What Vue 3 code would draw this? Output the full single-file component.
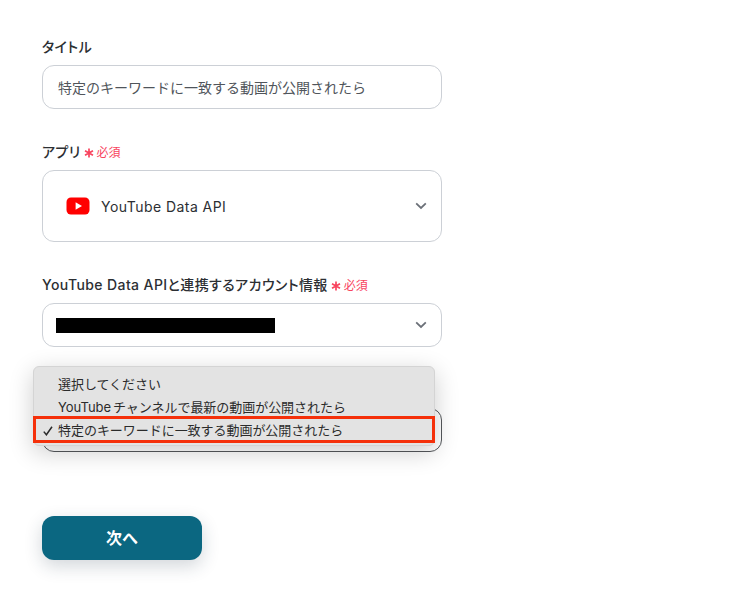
<template>
  <div class="page">
    <div class="field">
      <div class="label">タイトル</div>
      <div class="box">
        <span class="value muted">特定のキーワードに一致する動画が公開されたら</span>
      </div>
    </div>

    <div class="field">
      <div class="label">アプリ<span class="req"><svg class="star" width="10" height="10" viewBox="0 0 10 10"><path d="M5 0.4 V9.6 M1 2.7 L9 7.3 M9 2.7 L1 7.3" stroke="#f8445e" stroke-width="1.7" fill="none" /></svg>必須</span></div>
      <div class="box tall">
        <svg class="yt" width="24" height="18" viewBox="0 0 24 18">
          <rect x="0.5" y="0.5" width="23" height="17" rx="4.5" fill="#ff0000" />
          <path d="M9.6 5.2 L16 9 L9.6 12.8 Z" fill="#fff" />
        </svg>
        <span class="value latin">YouTube Data API</span>
        <svg class="chev" width="12" height="8" viewBox="0 0 12 8">
          <path d="M1.2 1.4 L6 6 L10.8 1.4" fill="none" stroke="#6b7078" stroke-width="1.8" />
        </svg>
      </div>
    </div>

    <div class="field">
      <div class="label">YouTube Data APIと連携するアカウント情報<span class="req"><svg class="star" width="10" height="10" viewBox="0 0 10 10"><path d="M5 0.4 V9.6 M1 2.7 L9 7.3 M9 2.7 L1 7.3" stroke="#f8445e" stroke-width="1.7" fill="none" /></svg>必須</span></div>
      <div class="box">
        <div class="redact"></div>
        <svg class="chev" width="12" height="8" viewBox="0 0 12 8">
          <path d="M1.2 1.4 L6 6 L10.8 1.4" fill="none" stroke="#6b7078" stroke-width="1.8" />
        </svg>
      </div>
    </div>

    <div class="action-field">
      <div class="box dark"></div>
      <div class="menu">
        <div class="opt"><span class="tick"></span>選択してください</div>
        <div class="opt"><span class="tick"></span><span class="yt-word">YouTube</span>チャンネルで最新の動画が公開されたら</div>
        <div class="opt">
          <span class="tick">
            <svg width="10" height="10" viewBox="0 0 10 10">
              <path d="M0.8 5.6 L3.4 8.8 L9 0.8" fill="none" stroke="#2b2b2b" stroke-width="1.5" />
            </svg>
          </span>{{ selected }}
        </div>
        <div class="mark"></div>
      </div>
    </div>

    <button class="next">次へ</button>
  </div>
</template>

<script setup>
const selected = '特定のキーワードに一致する動画が公開されたら'
</script>

<style scoped>
.page {
  width: 737px;
  height: 593px;
  box-sizing: border-box;
  padding: 37px 0 0 42px;
  background: #fff;
  overflow: hidden;
  font-family: Inter, "Noto Sans CJK JP", sans-serif;
  color: #2c2f33;
}

.field {
  width: 400px;
  margin-bottom: 33px;
}

.label {
  height: 20px;
  margin-bottom: 8px;
  font-size: 14px;
  font-weight: 500;
  line-height: 20px;
  letter-spacing: 0.4px;
  font-feature-settings: "palt";
  white-space: nowrap;
}

.req {
  margin-left: 3px;
  font-size: 12px;
  font-weight: 400;
  letter-spacing: 0;
  color: #f8445e;
}

.star {
  margin-right: 3px;
  vertical-align: -1px;
}

.box {
  display: flex;
  align-items: center;
  box-sizing: border-box;
  width: 400px;
  height: 44px;
  padding: 0 15px;
  background: #fff;
  border: 1px solid #ccd0d6;
  border-radius: 12px;
}

.tall {
  height: 72px;
  padding-left: 23px;
}

.dark {
  border-color: #55585c;
}

.value {
  font-size: 14px;
  white-space: nowrap;
}

.value.latin {
  letter-spacing: 0.45px;
}

.muted {
  color: #50555b;
}

.yt {
  margin-right: 11px;
}

.chev {
  margin-left: auto;
  margin-right: -1px;
}

.redact {
  width: 219px;
  height: 15px;
  margin-left: -2px;
  background: #000;
}

.action-field {
  position: relative;
  width: 400px;
  height: 44px;
  margin-top: 61px;
}

.menu {
  position: absolute;
  left: -9px;
  top: -42px;
  box-sizing: border-box;
  width: 402px;
  height: 80px;
  padding-top: 6px;
  background: #e3e3e3;
  border: 1px solid #d4d4d4;
  border-radius: 6px;
  box-shadow: 0 6px 24px rgba(0, 0, 0, 0.2);
  font-size: 13px;
  letter-spacing: -0.04px;
  color: #2b2b2b;
}

.opt {
  display: flex;
  height: 23px;
  line-height: 23px;
  white-space: nowrap;
}

.tick {
  display: flex;
  align-items: center;
  width: 24px;
  padding-left: 9px;
  box-sizing: border-box;
  flex: none;
}

.yt-word {
  margin-right: 2px;
}

.mark {
  position: absolute;
  left: -1px;
  top: 49px;
  height: 27px;
  box-sizing: border-box;
  width: 402px;
  border: 3px solid #f5300a;
}

.next {
  display: block;
  width: 160px;
  height: 44px;
  margin-top: 64px;
  padding: 0 0 2px;
  background: #0b6781;
  border: none;
  border-radius: 12px;
  box-shadow: 0 6px 18px rgba(30, 50, 70, 0.2);
  color: #fff;
  font-family: inherit;
  font-size: 16px;
  font-weight: 700;
}
</style>
